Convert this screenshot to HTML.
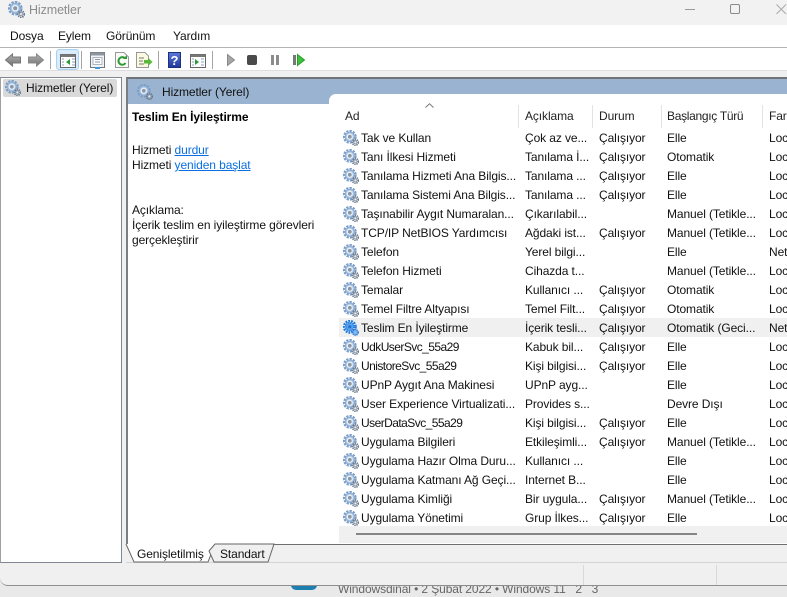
<!DOCTYPE html>
<html lang="tr"><head><meta charset="utf-8"><title>Hizmetler</title>
<style>
*{box-sizing:border-box}
html,body{margin:0;padding:0}
body{width:787px;height:590px;overflow:hidden;position:relative;background:#e9e9e9;font:12px/16px "Liberation Sans",sans-serif;color:#111;letter-spacing:-.1px}
.a{position:absolute}
.t{position:absolute;white-space:nowrap;overflow:hidden}
svg{position:absolute;overflow:visible}
a{color:#0a6fe0;text-decoration:underline}
.s{position:absolute;top:105px;width:1px;height:23px;background:#e3e3e3}
.h{position:absolute;top:108px;white-space:nowrap;color:#222}
.r{position:absolute;left:339px;width:448px;height:19px;white-space:nowrap}
.r span{position:absolute;top:1px;overflow:hidden;line-height:16px}
.r svg{left:4px;top:1px}
.r span:nth-of-type(1){left:22px;width:158px}
.r span:nth-of-type(2){left:186px;width:68px}
.r span:nth-of-type(3){left:260px;width:62px}
.r span:nth-of-type(4){left:328px;width:96px}
.r span:nth-of-type(5){left:430px;width:30px}
.n{letter-spacing:-.55px}
</style></head><body>
<svg width="0" height="0" style="left:0;top:0"><defs>
<symbol id="g" viewBox="0 0 16 16">
<circle cx="6.8" cy="6.8" r="5.7" fill="none" stroke="#7b9cc6" stroke-width="2.4" stroke-dasharray="2.2 1.1"/>
<circle cx="6.8" cy="6.8" r="4.5" fill="#b9cde4" stroke="#8fb0d6" stroke-width="1.2"/>
<circle cx="6.8" cy="6.8" r="3" fill="#eef3f8"/>
<circle cx="6.8" cy="6.8" r="1.9" fill="#8a97a6"/>
<circle cx="12.4" cy="12.4" r="2.9" fill="none" stroke="#68778a" stroke-width="1.7" stroke-dasharray="1.3 .8"/>
<circle cx="12.4" cy="12.4" r="1.5" fill="#e6ebf0" stroke="#8492a3" stroke-width=".7"/>
</symbol>
<symbol id="h" viewBox="0 0 16 16">
<circle cx="6.8" cy="6.8" r="5.7" fill="none" stroke="#1f7ae0" stroke-width="2.6" stroke-dasharray="1.8 1"/>
<circle cx="6.8" cy="6.8" r="4" fill="#5aa2ec" stroke="#1f7ae0" stroke-width="1.4" stroke-dasharray="1.3 .8"/>
<circle cx="6.8" cy="6.8" r="1.6" fill="#1f6fd0"/>
<circle cx="12.4" cy="12.4" r="2.8" fill="#7fb6ee" stroke="#1f6fc8" stroke-width="1.4" stroke-dasharray="1.2 .8"/>
</symbol>
<linearGradient id="ag" x1="0" y1="0" x2="0" y2="1"><stop offset="0" stop-color="#b5b5b5"/><stop offset="1" stop-color="#6f6f6f"/></linearGradient>
</defs></svg>

<!-- background page peek -->
<div class="t" style="left:338px;top:581px;color:#666;font-size:12px">Windowsdinal • 2 Şubat 2022 • Windows 11 &nbsp; 2 &nbsp; 3</div>
<div class="a" style="left:291px;top:585px;width:26px;height:5px;background:#1d7fb0;border-radius:0 0 13px 13px"></div>

<!-- window -->
<div class="a" style="left:0;top:0;width:787px;height:586px;background:#f0f0f0;border-bottom:1px solid #8e8e8e;border-radius:0 0 0 8px;overflow:hidden">
 <div class="a" style="left:0;top:0;width:787px;height:25px;background:#f2f2f2"></div>
 <svg style="left:8px;top:1px" width="17" height="17"><use href="#g" width="17" height="17"/></svg>
 <div class="t" style="left:29px;top:2px;color:#8c8c8c;font-size:12.5px">Hizmetler</div>
 <div class="a" style="left:685px;top:9px;width:10px;height:1px;background:#9a9a9a"></div>
 <div class="a" style="left:730px;top:4px;width:10px;height:10px;border:1px solid #8a8a8a;border-radius:2px"></div>
 <svg style="left:776px;top:4px" width="11" height="11"><path d="M.5.5L10 10M10 .5L.5 10" stroke="#aaa" fill="none"/></svg>

 <div class="a" style="left:0;top:25px;width:787px;height:23px;background:#fff;border-bottom:1px solid #b3b3b8"></div>
 <div class="t" style="left:10px;top:28px">Dosya</div>
 <div class="t" style="left:58px;top:28px">Eylem</div>
 <div class="t" style="left:106px;top:28px">Görünüm</div>
 <div class="t" style="left:173px;top:28px">Yardım</div>

 <div class="a" style="left:0;top:48px;width:787px;height:23px;background:#fff;border-bottom:1px solid #dedede"></div>
 <svg style="left:5px;top:53px" width="16" height="14"><path d="M.5 7L7.500 1V4H15.500V10H7.500V13Z" fill="url(#ag)" stroke="#777"/></svg>
 <svg style="left:28px;top:53px" width="16" height="14"><path d="M15.500 7L8.500 1V4H.5V10H8.500V13Z" fill="url(#ag)" stroke="#888"/></svg>
 <div class="a" style="left:50px;top:51px;width:1px;height:18px;background:#a5a5a5"></div>
 <div class="a" style="left:56px;top:49px;width:23px;height:21px;background:#d9ecfb;border:1px solid #a8d2f2;border-radius:3px"></div>
 <svg style="left:60px;top:54px" width="16" height="14"><rect x=".5" y=".5" width="15" height="13" fill="#fff" stroke="#666"/><rect x=".5" y=".5" width="15" height="2.500" fill="#777"/><path d="M10 5L6 8L10 11Z" fill="#2a9a3a"/><path d="M12 5h3M12 8h3M12 11h3M2 5h2M2 8h2M2 11h2" stroke="#8aa0c0"/></svg>
 <div class="a" style="left:81px;top:51px;width:1px;height:18px;background:#a5a5a5"></div>
 <svg style="left:90px;top:52px" width="15" height="17"><rect x=".5" y=".5" width="14" height="15" fill="#f3f3f3" stroke="#6f7680"/><rect x=".5" y=".5" width="14" height="3" fill="#8f959e"/><rect x="3" y="5.500" width="9" height="7" fill="#fff" stroke="#a9b4c4"/><path d="M5 7.500h5M5 10h5" stroke="#8a94a4"/><rect x="5" y="15" width="5" height="2" fill="#3b9be0"/></svg>
 <svg style="left:115px;top:52px" width="14" height="16"><path d="M.5.5H9L13.500 5V15.500H.5Z" fill="#fbfbf5" stroke="#999"/><path d="M10.200 6.500A3.800 3.800 0 1 0 10.500 11" fill="none" stroke="#2f9a3a" stroke-width="2"/><path d="M8 7h4V3Z" fill="#2f9a3a"/></svg>
 <svg style="left:136px;top:52px" width="17" height="16"><path d="M.5.5H9L12.500 4V15.500H.5Z" fill="#fbf9e0" stroke="#999"/><path d="M3 6h5M3 9h4M3 12h5" stroke="#777"/><path d="M8 8h4V5.500L16.500 10L12 14V11.500H8Z" fill="#5cb83c"/></svg>
 <div class="a" style="left:158px;top:51px;width:1px;height:18px;background:#a5a5a5"></div>
 <div class="a" style="left:168px;top:52px;width:13px;height:16px;background:linear-gradient(#5a78d8,#1f3a9e);border:1px solid #1c2f80;color:#fff;font:bold 13px/15px 'Liberation Sans',sans-serif;text-align:center;letter-spacing:0">?</div>
 <svg style="left:190px;top:54px" width="16" height="14"><rect x=".5" y=".5" width="15" height="13" fill="#fff" stroke="#666"/><rect x=".5" y=".5" width="15" height="2.500" fill="#777"/><path d="M5 5L9 8L5 11Z" fill="#2a9a3a"/><path d="M11 5h3M11 8h3M11 11h3M2 5h2M2 8h2M2 11h2" stroke="#8aa0c0"/></svg>
 <div class="a" style="left:212px;top:51px;width:1px;height:18px;background:#a5a5a5"></div>
 <svg style="left:227px;top:54px" width="8" height="12"><path d="M.5.5L7.500 6L.5 11.500Z" fill="#a6a6a6" stroke="#8a8a8a"/></svg>
 <div class="a" style="left:247px;top:55px;width:10px;height:10px;background:#4a4a4a;border-radius:2px"></div>
 <div class="a" style="left:271px;top:55px;width:3px;height:10px;background:#8c8c8c"></div>
 <div class="a" style="left:276px;top:55px;width:3px;height:10px;background:#8c8c8c"></div>
 <div class="a" style="left:293px;top:55px;width:3px;height:10px;background:#777"></div>
 <svg style="left:297px;top:54px" width="8" height="12"><path d="M.5.5L7.500 6L.5 11.500Z" fill="#3cc23c" stroke="#2a9a2a"/></svg>

 <!-- left tree -->
 <div class="a" style="left:0;top:77px;width:122px;height:486px;background:#fff;border:1px solid #7f8790;border-left-color:#a0a0a0"></div>
 <div class="a" style="left:3px;top:79px;width:114px;height:18px;background:#d9d9d9;border-radius:2px"></div>
 <svg style="left:5px;top:80px" width="16" height="16"><use href="#g" width="16" height="16"/></svg>
 <div class="t" style="left:26px;top:80px">Hizmetler (Yerel)</div>

 <!-- right panel -->
 <div class="a" style="left:126px;top:77px;width:661px;height:467px;background:#fff;border-left:2px solid #7b7f85;border-top:2px solid #6f7378"></div>
 <div class="a" style="left:128px;top:79px;width:659px;height:25px;background:#9ab3d1"></div>
 <div class="a" style="left:329px;top:94px;width:458px;height:12px;background:#fff;border-radius:7px 0 0 0"></div>
 <svg style="left:137px;top:84px" width="16" height="16"><use href="#g" width="16" height="16"/></svg>
 <div class="t" style="left:162px;top:84px">Hizmetler (Yerel)</div>

 <div class="t" style="left:132px;top:109px;font-weight:bold;color:#000">Teslim En İyileştirme</div>
 <div class="t" style="left:132px;top:142px">Hizmeti <a>durdur</a></div>
 <div class="t" style="left:132px;top:157px">Hizmeti <a>yeniden başlat</a></div>
 <div class="t" style="left:132px;top:202px">Açıklama:</div>
 <div class="t" style="left:132px;top:217px">İçerik teslim en iyileştirme görevleri</div>
 <div class="t" style="left:132px;top:232px">gerçekleştirir</div>

 <!-- header -->
 <svg style="left:425px;top:103px" width="9" height="5"><path d="M.5 4.500L4.500 .8L8.500 4.500" fill="none" stroke="#777"/></svg>
 <div class="h" style="left:345px">Ad</div>
 <div class="s" style="left:518px"></div><div class="h" style="left:525px">Açıklama</div>
 <div class="s" style="left:592px"></div><div class="h" style="left:599px">Durum</div>
 <div class="s" style="left:661px"></div><div class="h" style="left:667px;letter-spacing:-.3px">Başlangıç Türü</div>
 <div class="s" style="left:762px"></div><div class="h" style="left:769px">Far</div>

 <!-- rows -->
 <div class="r" style="top:129px"><svg width="16" height="16"><use href="#g" width="16" height="16"/></svg><span>Tak ve Kullan</span><span>Çok az ve...</span><span>Çalışıyor</span><span>Elle</span><span>Loc</span></div>
 <div class="r" style="top:148px"><svg width="16" height="16"><use href="#g" width="16" height="16"/></svg><span>Tanı İlkesi Hizmeti</span><span>Tanılama İ...</span><span>Çalışıyor</span><span>Otomatik</span><span>Loc</span></div>
 <div class="r" style="top:167px"><svg width="16" height="16"><use href="#g" width="16" height="16"/></svg><span>Tanılama Hizmeti Ana Bilgis...</span><span>Tanılama ...</span><span>Çalışıyor</span><span>Elle</span><span>Loc</span></div>
 <div class="r" style="top:186px"><svg width="16" height="16"><use href="#g" width="16" height="16"/></svg><span>Tanılama Sistemi Ana Bilgis...</span><span>Tanılama ...</span><span>Çalışıyor</span><span>Elle</span><span>Loc</span></div>
 <div class="r" style="top:205px"><svg width="16" height="16"><use href="#g" width="16" height="16"/></svg><span>Taşınabilir Aygıt Numaralan...</span><span>Çıkarılabil...</span><span></span><span>Manuel (Tetikle...</span><span>Loc</span></div>
 <div class="r" style="top:224px"><svg width="16" height="16"><use href="#g" width="16" height="16"/></svg><span>TCP/IP NetBIOS Yardımcısı</span><span>Ağdaki ist...</span><span>Çalışıyor</span><span>Manuel (Tetikle...</span><span>Loc</span></div>
 <div class="r" style="top:243px"><svg width="16" height="16"><use href="#g" width="16" height="16"/></svg><span>Telefon</span><span>Yerel bilgi...</span><span></span><span>Elle</span><span>Net</span></div>
 <div class="r" style="top:262px"><svg width="16" height="16"><use href="#g" width="16" height="16"/></svg><span>Telefon Hizmeti</span><span>Cihazda t...</span><span></span><span>Manuel (Tetikle...</span><span>Loc</span></div>
 <div class="r" style="top:281px"><svg width="16" height="16"><use href="#g" width="16" height="16"/></svg><span>Temalar</span><span>Kullanıcı ...</span><span>Çalışıyor</span><span>Otomatik</span><span>Loc</span></div>
 <div class="r" style="top:300px"><svg width="16" height="16"><use href="#g" width="16" height="16"/></svg><span>Temel Filtre Altyapısı</span><span>Temel Filt...</span><span>Çalışıyor</span><span>Otomatik</span><span>Loc</span></div>
 <div class="r" style="top:318px;height:19px;background:#f0f0f0"><svg width="16" height="16" style="top:2px"><use href="#h" width="16" height="16"/></svg><span style="top:2px">Teslim En İyileştirme</span><span style="top:2px">İçerik tesli...</span><span style="top:2px">Çalışıyor</span><span style="top:2px">Otomatik (Geci...</span><span style="top:2px">Net</span></div>
 <div class="r" style="top:338px"><svg width="16" height="16"><use href="#g" width="16" height="16"/></svg><span class="n">UdkUserSvc_55a29</span><span>Kabuk bil...</span><span>Çalışıyor</span><span>Elle</span><span>Loc</span></div>
 <div class="r" style="top:357px"><svg width="16" height="16"><use href="#g" width="16" height="16"/></svg><span class="n">UnistoreSvc_55a29</span><span>Kişi bilgisi...</span><span>Çalışıyor</span><span>Elle</span><span>Loc</span></div>
 <div class="r" style="top:376px"><svg width="16" height="16"><use href="#g" width="16" height="16"/></svg><span>UPnP Aygıt Ana Makinesi</span><span>UPnP ayg...</span><span></span><span>Elle</span><span>Loc</span></div>
 <div class="r" style="top:395px"><svg width="16" height="16"><use href="#g" width="16" height="16"/></svg><span>User Experience Virtualizati...</span><span>Provides s...</span><span></span><span>Devre Dışı</span><span>Loc</span></div>
 <div class="r" style="top:414px"><svg width="16" height="16"><use href="#g" width="16" height="16"/></svg><span class="n">UserDataSvc_55a29</span><span>Kişi bilgisi...</span><span>Çalışıyor</span><span>Elle</span><span>Loc</span></div>
 <div class="r" style="top:433px"><svg width="16" height="16"><use href="#g" width="16" height="16"/></svg><span>Uygulama Bilgileri</span><span>Etkileşimli...</span><span>Çalışıyor</span><span>Manuel (Tetikle...</span><span>Loc</span></div>
 <div class="r" style="top:452px"><svg width="16" height="16"><use href="#g" width="16" height="16"/></svg><span>Uygulama Hazır Olma Duru...</span><span>Kullanıcı ...</span><span></span><span>Elle</span><span>Loc</span></div>
 <div class="r" style="top:471px"><svg width="16" height="16"><use href="#g" width="16" height="16"/></svg><span>Uygulama Katmanı Ağ Geçi...</span><span>Internet B...</span><span></span><span>Elle</span><span>Loc</span></div>
 <div class="r" style="top:490px"><svg width="16" height="16"><use href="#g" width="16" height="16"/></svg><span>Uygulama Kimliği</span><span>Bir uygula...</span><span>Çalışıyor</span><span>Manuel (Tetikle...</span><span>Loc</span></div>
 <div class="r" style="top:509px"><svg width="16" height="16"><use href="#g" width="16" height="16"/></svg><span>Uygulama Yönetimi</span><span>Grup İlkes...</span><span>Çalışıyor</span><span>Elle</span><span>Loc</span></div>

 <!-- scrollbar -->
 <div class="a" style="left:339px;top:526px;width:448px;height:17px;background:#f0f0f0"></div>
 <div class="a" style="left:356px;top:533px;width:341px;height:2px;background:#858585"></div>

 <!-- tabs -->
 <div class="a" style="left:126px;top:544px;width:661px;height:19px;background:#f0f0f0;border-bottom:1px solid #d4d4d4"></div>
 <div class="a" style="left:270px;top:544px;width:517px;height:1px;background:#6e6e6e"></div>
 <svg style="left:125px;top:543px" width="150" height="20">
 <path d="M1 1L9 19H83L90 1" fill="#fff" stroke="#666"/>
 <path d="M90 1H149L143 19H89L84 8Z" fill="#f0f0f0" stroke="#666"/>
 </svg>
 <div class="t" style="left:137px;top:546px">Genişletilmiş</div>
 <div class="t" style="left:220px;top:546px">Standart</div>

 <!-- status -->
 <div class="a" style="left:583px;top:565px;width:1px;height:20px;background:#d8d8d8"></div>
 <div class="a" style="left:716px;top:565px;width:1px;height:20px;background:#d8d8d8"></div>
</div>
</body></html>
